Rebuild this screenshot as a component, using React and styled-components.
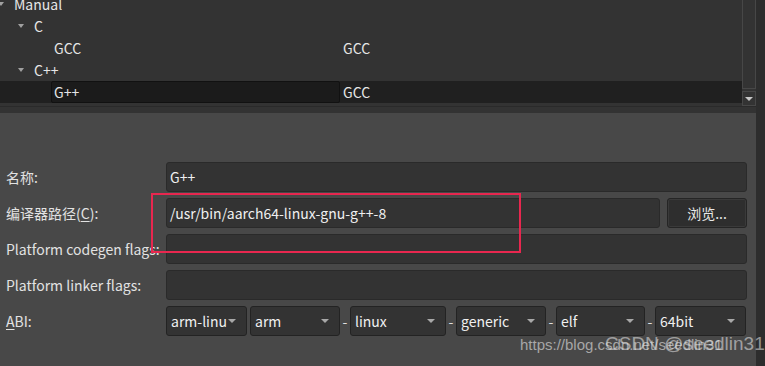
import styled, { createGlobalStyle } from 'styled-components'

const Global = createGlobalStyle`
body {
  margin: 0;
  background: #2d2d2d;
  font-family: "Noto Sans CJK SC", "Noto Sans", sans-serif;
}
`

const Window = styled.div`
position: relative;
display: flex;
width: 765px;
height: 366px;
overflow: hidden;
background: #2d2d2d;
`

const Main = styled.div`
width: 756px;
display: flex;
flex-direction: column;
`

const TreeArea = styled.div`
height: 113px;
background: #333333;
display: flex;
flex-direction: column;
`

const TreeFrame = styled.div`
height: 107px;
display: flex;
border-bottom: 1px solid #2a2a2a;
box-sizing: border-box;
`

const Tree = styled.div`
width: 742px;
overflow: hidden;
`

const TreeRows = styled.div`
margin-top: -7px;
`

const Row = styled.div`
display: flex;
align-items: center;
height: 22px;
background: ${p => (p.$selected ? '#202020' : 'transparent')};
color: #e6e6e6;
font-size: 14px;
`

const Expander = styled.span`
width: 14px;
margin-left: ${p => p.$indent}px;
display: flex;
align-items: center;
&::before {
  content: '';
  border-left: 3.5px solid transparent;
  border-right: 3.5px solid transparent;
  border-top: 4px solid #a0a0a0;
  margin-left: 1px;
}
`

const NameCell = styled.div`
width: 289px;
height: 22px;
margin-left: ${p => p.$indent}px;
display: flex;
align-items: center;
padding-left: 3px;
box-sizing: border-box;
${p =>
  p.$current &&
  `
  background: #1b1b1b;
  border: 1px solid #111;
  border-radius: 2px;
  padding-left: 2px;
`}
`

const TypeCell = styled.div`
padding-left: 3px;
`

const Scrollbar = styled.div`
width: 14px;
display: flex;
flex-direction: column;
gap: 2px;
`

const Track = styled.div`
flex: 1;
border: 1px solid #474747;
border-top: none;
background: #333;
`

const ArrowButton = styled.div`
height: 13px;
border: 1px solid #474747;
display: flex;
align-items: center;
justify-content: center;
&::before {
  content: '';
  border-left: 4px solid transparent;
  border-right: 4px solid transparent;
  border-top: 4px solid #c8c8c8;
}
`

const Form = styled.div`
flex: 1;
background: #484848;
padding: 49px 9px 0 6px;
display: flex;
flex-direction: column;
gap: 6px;
`

const FormRow = styled.div`
display: flex;
align-items: center;
height: 30px;
`

const Label = styled.div`
width: 160px;
color: #e2e2e2;
font-size: 14px;
white-space: nowrap;
u {
  text-decoration-thickness: 1px;
  text-underline-offset: 2px;
}
`

const Field = styled.div`
flex: 1;
height: 30px;
box-sizing: border-box;
background: #333333;
border: 1px solid #2a2a2a;
border-radius: 3px;
display: flex;
align-items: center;
padding-left: 3px;
color: #f0f0f0;
font-size: 14px;
`

const Button = styled.div`
width: 80px;
height: 30px;
margin-left: 7px;
box-sizing: border-box;
background: #2e2e2e;
border: 1px solid #252525;
box-shadow: inset 0 0 0 1px #3a3a3a;
border-radius: 3px;
display: flex;
align-items: center;
justify-content: center;
color: #e8e8e8;
font-size: 14px;
`

const Combos = styled.div`
flex: 1;
display: flex;
align-items: center;
`

const Combo = styled.div`
width: ${p => p.$w}px;
height: 30px;
box-sizing: border-box;
margin-left: ${p => p.$gap}px;
background: #333333;
border: 1px solid #232323;
border-radius: 3px;
display: flex;
align-items: center;
justify-content: space-between;
padding: 0 10px 0 4px;
color: #f0f0f0;
font-size: 14px;
&::after {
  content: '';
  border-left: 4px solid transparent;
  border-right: 4px solid transparent;
  border-top: 4px solid #a8a8a8;
}
`

const Dash = styled.span`
width: 10px;
text-align: center;
color: #e0e0e0;
font-size: 14px;
`

const Mark = styled.div`
position: absolute;
left: 151px;
top: 193px;
width: 370px;
height: 60px;
box-sizing: border-box;
border: 2px solid #e8274f;
`

const Watermark = styled.div`
position: absolute;
left: 520px;
top: 336px;
font-family: "Liberation Sans", Arial, sans-serif;
font-size: 15px;
color: rgba(200, 200, 200, 0.75);
white-space: nowrap;
`

const Stamp = styled.div`
position: absolute;
left: 605px;
top: 333px;
font-family: "Liberation Sans", Arial, sans-serif;
font-size: 19px;
color: rgba(235, 235, 235, 0.55);
white-space: nowrap;
`

const combos = [
  { text: 'arm-linu', w: 81, gap: 0 },
  { text: 'arm', w: 90, gap: 3 },
  { text: 'linux', w: 96, gap: 0, dash: true },
  { text: 'generic', w: 90, gap: 0, dash: true },
  { text: 'elf', w: 89, gap: 0, dash: true },
  { text: '64bit', w: 91, gap: 0, dash: true },
]

const App = () => {
  return (
    <Window>
      <Global />
      <Main>
        <TreeArea>
          <TreeFrame>
            <Tree>
              <TreeRows>
                <Row>
                  <Expander $indent={-3} />
                  <NameCell $indent={0}>Manual</NameCell>
                </Row>
                <Row>
                  <Expander $indent={17} />
                  <NameCell $indent={0}>C</NameCell>
                </Row>
                <Row>
                  <NameCell $indent={51}>GCC</NameCell>
                  <TypeCell>GCC</TypeCell>
                </Row>
                <Row>
                  <Expander $indent={17} />
                  <NameCell $indent={0}>C++</NameCell>
                </Row>
                <Row $selected>
                  <NameCell $indent={51} $current>G++</NameCell>
                  <TypeCell>GCC</TypeCell>
                </Row>
              </TreeRows>
            </Tree>
            <Scrollbar>
              <Track />
              <ArrowButton />
            </Scrollbar>
          </TreeFrame>
        </TreeArea>
        <Form>
          <FormRow>
            <Label>名称:</Label>
            <Field>G++</Field>
          </FormRow>
          <FormRow>
            <Label>编译器路径(<u>C</u>):</Label>
            <Field>/usr/bin/aarch64-linux-gnu-g++-8</Field>
            <Button>浏览...</Button>
          </FormRow>
          <FormRow>
            <Label>Platform codegen flags:</Label>
            <Field />
          </FormRow>
          <FormRow>
            <Label>Platform linker flags:</Label>
            <Field />
          </FormRow>
          <FormRow>
            <Label><u>A</u>BI:</Label>
            <Combos>
              {combos.map(c => (
                <>
                  {c.dash && <Dash key={c.text + '-d'}>-</Dash>}
                  <Combo key={c.text} $w={c.w} $gap={c.gap}>{c.text}</Combo>
                </>
              ))}
            </Combos>
          </FormRow>
        </Form>
      </Main>
      <Mark />
      <Watermark>https://blog.csdn.net/seedlin31</Watermark>
      <Stamp>CSDN @seedlin31</Stamp>
    </Window>
  )
}

export default App
